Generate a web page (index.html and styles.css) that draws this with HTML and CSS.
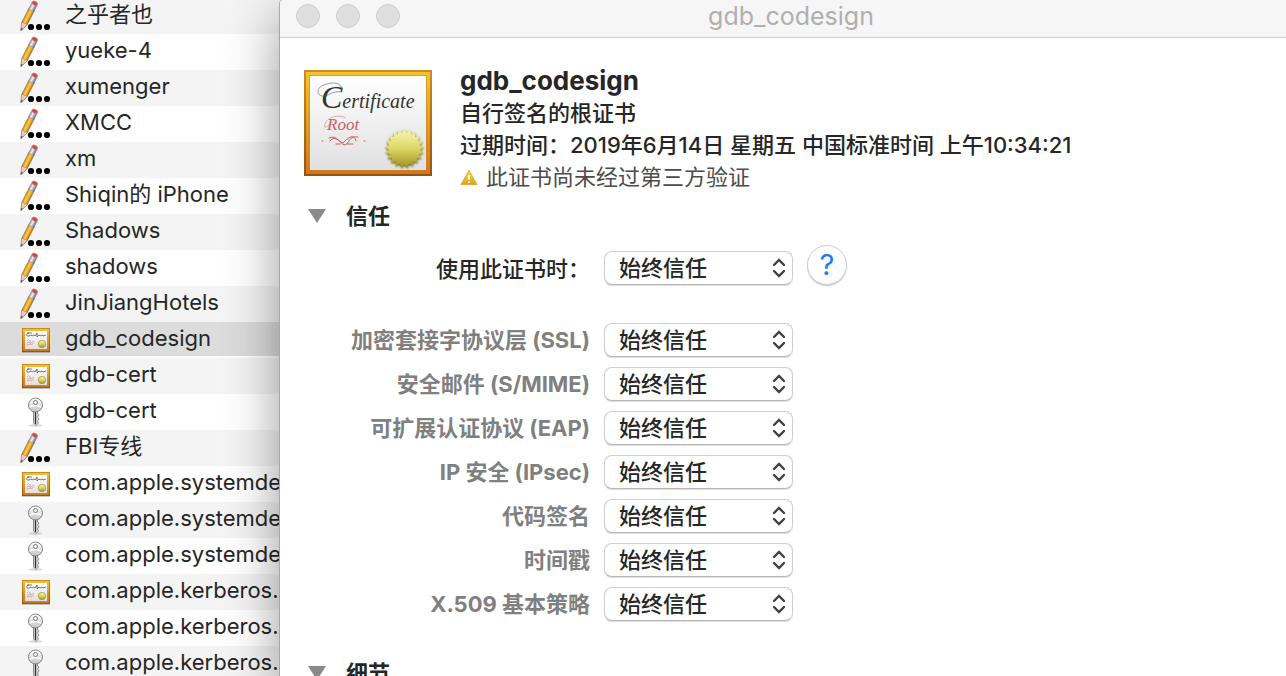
FILE: index.html
```html
<!DOCTYPE html>
<html lang="zh-CN">
<head>
<meta charset="utf-8">
<title>gdb_codesign</title>
<link rel="stylesheet" href="styles.css">
</head>
<body>
<svg class="defs" aria-hidden="true">
  <defs>
    <linearGradient id="wood" x1="0" y1="0" x2="0" y2="1"><stop offset="0" stop-color="#efc52c"/><stop offset="1" stop-color="#cb7a1c"/></linearGradient>
    <linearGradient id="edge" x1="0" y1="0" x2="0" y2="1"><stop offset="0" stop-color="#d08a20"/><stop offset="1" stop-color="#9c5010"/></linearGradient>
    <linearGradient id="paper" x1="0" y1="0" x2="0" y2="1"><stop offset="0" stop-color="#fff"/><stop offset="1" stop-color="#e0e0e0"/></linearGradient>
    <linearGradient id="gold" x1="0" y1="0" x2="0" y2="1"><stop offset="0" stop-color="#fbf8b4"/><stop offset=".5" stop-color="#dcd565"/><stop offset="1" stop-color="#a1921c"/></linearGradient>
    <linearGradient id="barrel" x1="0" y1="0" x2="1" y2="0"><stop offset="0" stop-color="#c7871c"/><stop offset=".45" stop-color="#ffd24d"/><stop offset="1" stop-color="#b86d12"/></linearGradient>
    <linearGradient id="ferrule" x1="0" y1="0" x2="1" y2="0"><stop offset="0" stop-color="#8b8fa0"/><stop offset=".4" stop-color="#f0f2f8"/><stop offset="1" stop-color="#5f6478"/></linearGradient>
    <linearGradient id="steel" x1="0" y1="0" x2="0" y2="1"><stop offset="0" stop-color="#fff"/><stop offset="1" stop-color="#c4c4c4"/></linearGradient>
    <linearGradient id="amber" x1="0" y1="0" x2="0" y2="1"><stop offset="0" stop-color="#fbdc4a"/><stop offset="1" stop-color="#e0a01c"/></linearGradient>
    <clipPath id="star">
      <path d="M100.500 59 117.400 88.250H83.600Z"/>
      <path d="M100.500 59 117.400 88.250H83.600Z" transform="rotate(17.143 100.5 78.5)"/>
      <path d="M100.500 59 117.400 88.250H83.600Z" transform="rotate(34.286 100.5 78.5)"/>
      <path d="M100.500 59 117.400 88.250H83.600Z" transform="rotate(51.429 100.5 78.5)"/>
      <path d="M100.500 59 117.400 88.250H83.600Z" transform="rotate(68.571 100.5 78.5)"/>
      <path d="M100.500 59 117.400 88.250H83.600Z" transform="rotate(85.714 100.5 78.5)"/>
      <path d="M100.500 59 117.400 88.250H83.600Z" transform="rotate(102.857 100.5 78.5)"/>
    </clipPath>
    <symbol id="i-note" viewBox="0 0 32 32">
      <g transform="translate(2.2 30) rotate(27)">
        <path d="M-3-23H3V-7L0 0-3-7Z" fill="url(#barrel)" stroke="#8a6428" stroke-width=".5"/>
        <path d="M-3-7 0 1 3-7 1.500-8 0-7-1.500-8Z" fill="#eccdb4" stroke="#9a7c68" stroke-width=".5"/>
        <path d="M-1-2 0 1 1-2Z" fill="#5a4a50"/>
        <path d="M-3-29H3V-22H-3Z" fill="url(#ferrule)" stroke="#777c90" stroke-width=".4"/>
        <path d="M-3-29V-30Q-3-32 0-32T3-30V-29Q0-27-3-29Z" fill="#d6453f" stroke="#b89090" stroke-width=".5"/>
      </g>
      <circle cx="12" cy="27" r="3.100"/><circle cx="20" cy="27" r="3.100"/><circle cx="28" cy="27" r="3.100"/>
    </symbol>
    <symbol id="i-cert" viewBox="0 0 32 32">
      <path d="M3 28H31" stroke="#0003" stroke-width="2"/>
      <path d="M3 4H31V28H3Z" fill="url(#edge)"/>
      <path d="M4 5H30V27H4Z" fill="url(#wood)"/>
      <path d="M6 7H28V25H6Z" fill="url(#paper)"/>
      <path d="M10 9C7 9 7 13 10 12L12 11 13 12 15 11 16 12 18 9 18 13 20 11 21 12 23 11 24 12 27 11M8 9H13" fill="none" stroke="#555" stroke-width=".8"/>
      <path d="M8 17Q10 14 11 17T15 17M8 19 11 18 12 21 15 19M8 21 11 20" fill="none" stroke="#e48b8b" stroke-width=".7"/>
      <circle cx="23" cy="20" r="3.700" fill="url(#gold)" stroke="#a89b35" stroke-width=".8"/>
    </symbol>
    <symbol id="i-key" viewBox="0 0 32 32">
      <ellipse cx="16.500" cy="29.500" rx="7" ry="1.500" fill="#0002"/>
      <path d="M14.500 14H18.500V18L20 19 18.500 21 20 23 18.500 25 19.500 27 17 29.500 14.500 27Z" fill="#ddd" stroke="#777" stroke-width=".8"/>
      <path d="M16.500 15V28" stroke="#333" stroke-width="1.300"/>
      <circle cx="16.500" cy="9" r="7" fill="url(#steel)" stroke="#858585"/>
      <path d="M11 11Q16 8 22 11" fill="none" stroke="#fff" stroke-width="1.500"/>
      <circle cx="16.500" cy="6.500" r="2" fill="#fff" stroke="#777"/>
    </symbol>
    <symbol id="i-arrows" viewBox="0 0 14 20"><path d="M2 7 7 2 12 7M2 13 7 18 12 13" fill="none" stroke="#404040" stroke-width="2.400" stroke-linecap="round" stroke-linejoin="miter"/></symbol>
  </defs>
</svg>
<div class="desktop">
  <nav class="sidebar" aria-label="钥匙串">
    <ul class="items">
      <li class="item"><svg class="icon"><use href="#i-note"/></svg><span>之乎者也</span></li>
      <li class="item"><svg class="icon"><use href="#i-note"/></svg><span>yueke-4</span></li>
      <li class="item"><svg class="icon"><use href="#i-note"/></svg><span>xumenger</span></li>
      <li class="item"><svg class="icon"><use href="#i-note"/></svg><span>XMCC</span></li>
      <li class="item"><svg class="icon"><use href="#i-note"/></svg><span>xm</span></li>
      <li class="item"><svg class="icon"><use href="#i-note"/></svg><span>Shiqin的 iPhone</span></li>
      <li class="item"><svg class="icon"><use href="#i-note"/></svg><span>Shadows</span></li>
      <li class="item"><svg class="icon"><use href="#i-note"/></svg><span>shadows</span></li>
      <li class="item"><svg class="icon"><use href="#i-note"/></svg><span>JinJiangHotels</span></li>
      <li class="item selected"><svg class="icon"><use href="#i-cert"/></svg><span>gdb_codesign</span></li>
      <li class="item"><svg class="icon"><use href="#i-cert"/></svg><span>gdb-cert</span></li>
      <li class="item"><svg class="icon"><use href="#i-key"/></svg><span>gdb-cert</span></li>
      <li class="item"><svg class="icon"><use href="#i-note"/></svg><span>FBI专线</span></li>
      <li class="item"><svg class="icon"><use href="#i-cert"/></svg><span>com.apple.systemde</span></li>
      <li class="item"><svg class="icon"><use href="#i-key"/></svg><span>com.apple.systemde</span></li>
      <li class="item"><svg class="icon"><use href="#i-key"/></svg><span>com.apple.systemde</span></li>
      <li class="item"><svg class="icon"><use href="#i-cert"/></svg><span>com.apple.kerberos.</span></li>
      <li class="item"><svg class="icon"><use href="#i-key"/></svg><span>com.apple.kerberos.</span></li>
      <li class="item"><svg class="icon"><use href="#i-key"/></svg><span>com.apple.kerberos.</span></li>
    </ul>
  </nav>
  <main class="window">
    <header class="titlebar">
      <div class="lights">
        <button class="light" aria-label="关闭"></button>
        <button class="light" aria-label="最小化"></button>
        <button class="light" aria-label="缩放"></button>
      </div>
      <div class="title">gdb_codesign</div>
    </header>
    <div class="content">
      <section class="summary">
        <svg class="certificate" viewBox="0 0 128 106">
          <path d="M0 0H128V106H0Z" fill="url(#edge)"/>
          <path d="M2 2H126V104H2Z" fill="url(#wood)"/>
          <path d="M5 5H123V101H5Z" fill="#c8872a" opacity=".55"/>
          <path d="M6 6H122V100H6Z" fill="url(#paper)"/>
          <text class="script-name" x="17" y="38"><tspan class="script-cap">C</tspan>ertificate</text>
          <path d="M37 21C40 15 32 11 23 14C12 16 12 25 18 26C24 27 29 20 37 22" fill="none" stroke="#555" stroke-width=".6"/>
          <text class="script-root" x="23" y="60">Root</text>
          <path d="M30 50C24 57 19 60 21 54C23 47 35 44 42 48" fill="none" stroke="#d37779" stroke-width=".6"/>
          <path d="M26 71C31 65 34 71 39 73C46 65 51 65 52 71M25 68C34 64 35 74 41 75C45 74 45 65 54 67M32 74H36M43 74H49M18 71H19M60 71H61" fill="none" stroke="#cc5c60" stroke-width="1" stroke-linecap="round"/>
          <g class="seal"><rect x="81" y="59" width="39" height="39" fill="url(#gold)" clip-path="url(#star)"/></g>
        </svg>
        <div class="facts">
          <h1 class="name">gdb_codesign</h1>
          <p class="fact">自行签名的根证书</p>
          <p class="fact">过期时间：2019年6月14日 星期五 中国标准时间 上午10:34:21</p>
          <p class="fact notice">
            <svg class="warning" viewBox="0 0 18 17"><path d="M9 1.500 17 15.500H1Z" fill="url(#amber)" stroke="#e5ad2c" stroke-linejoin="round"/><path d="M9 6V10.500M9 12.500V14" stroke="#fff" stroke-width="2"/></svg>
            <span>此证书尚未经过第三方验证</span>
          </p>
        </div>
      </section>
      <details open>
        <summary class="heading"><svg class="triangle" viewBox="0 0 18 14"><path d="M0 0H18L9 14Z"/></svg>信任</summary>
        <form class="trust">
          <div class="row first">
            <label for="all">使用此证书时：</label>
            <span class="picker"><select id="all"><option>始终信任</option></select><svg class="arrows"><use href="#i-arrows"/></svg></span>
            <button class="help" type="button" aria-label="帮助"><span>?</span></button>
          </div>
          <div class="row"><label for="ssl">加密套接字协议层 (SSL)</label><span class="picker"><select id="ssl"><option>始终信任</option></select><svg class="arrows"><use href="#i-arrows"/></svg></span></div>
          <div class="row"><label for="smime">安全邮件 (S/MIME)</label><span class="picker"><select id="smime"><option>始终信任</option></select><svg class="arrows"><use href="#i-arrows"/></svg></span></div>
          <div class="row"><label for="eap">可扩展认证协议 (EAP)</label><span class="picker"><select id="eap"><option>始终信任</option></select><svg class="arrows"><use href="#i-arrows"/></svg></span></div>
          <div class="row"><label for="ipsec">IP 安全 (IPsec)</label><span class="picker"><select id="ipsec"><option>始终信任</option></select><svg class="arrows"><use href="#i-arrows"/></svg></span></div>
          <div class="row"><label for="code">代码签名</label><span class="picker"><select id="code"><option>始终信任</option></select><svg class="arrows"><use href="#i-arrows"/></svg></span></div>
          <div class="row"><label for="time">时间戳</label><span class="picker"><select id="time"><option>始终信任</option></select><svg class="arrows"><use href="#i-arrows"/></svg></span></div>
          <div class="row"><label for="x509">X.509 基本策略</label><span class="picker"><select id="x509"><option>始终信任</option></select><svg class="arrows"><use href="#i-arrows"/></svg></span></div>
        </form>
      </details>
      <details open>
        <summary class="heading"><svg class="triangle" viewBox="0 0 18 14"><path d="M0 0H18L9 14Z"/></svg>细节</summary>
      </details>
    </div>
  </main>
</div>
</body>
</html>
```
FILE: styles.css
```css
* { box-sizing: border-box; }
body {
  margin: 0;
  overflow: hidden;
  background: #fff;
  color: #262626;
  font: 22px/32px Inter, "Noto Sans CJK SC", sans-serif;
}
button, select { font: inherit; color: inherit; }
.defs { position: absolute; width: 0; height: 0; }
.desktop { display: flex; height: 100vh; overflow: hidden; }
.sidebar { flex: none; width: 280px; overflow: hidden; }
.items { margin: -2px 0 0; padding: 0; list-style: none; }
.item {
  display: flex;
  align-items: flex-start;
  gap: 14px;
  height: 36px;
  padding-left: 19px;
  white-space: nowrap;
}
.item:nth-child(odd) { background: #f4f4f4; }
.item.selected { background: #dcdcdc; border-bottom: 2px solid #fff; }
.item .icon { flex: none; width: 32px; height: 32px; margin-top: 2px; }

.window {
  position: relative;
  flex: 1;
  min-width: 0;
  background: #fff;
  border-top-left-radius: 4px;
  box-shadow: 0 0 0 1px #a8a8a8, 0 16px 54px 0 rgba(0, 0, 0, .42);
}
.titlebar {
  display: grid;
  grid-template-columns: 1fr auto 1fr;
  align-items: center;
  height: 38px;
  padding: 0 0 5px 16px;
  background: #f6f6f6;
  border-bottom: 1px solid #cfcfcf;
  border-top-left-radius: 4px;
}
.lights { display: flex; gap: 16px; }
.light { width: 24px; height: 24px; padding: 0; border: 1px solid #cecece; border-radius: 50%; background: #dedede; }
.title { font-size: 25px; color: #b0b0b0; }

.content { padding: 27px 24px 0; }
.summary { display: flex; gap: 28px; }
.certificate { flex: none; width: 128px; height: 106px; margin-top: 5px; }
.script-name { font: italic 20px "Liberation Serif", serif; fill: #333; }
.script-cap { font-size: 32px; }
.script-root { font: italic 17px "Liberation Serif", serif; fill: #d05c60; }
.seal { filter: drop-shadow(0 1px 1px #665c20); }
.facts { min-width: 0; }
.name { margin: 0; font-size: 26px; line-height: 32px; font-weight: 700; }
.fact { margin: 0; font-weight: 500; }
.fact.notice { display: flex; align-items: center; gap: 8px; font-weight: 400; color: #4c4c4c; }
.warning { width: 18px; height: 17px; }

.heading { display: flex; align-items: center; gap: 20px; margin-top: 7px; padding-left: 4px; font-weight: 700; list-style: none; }
.heading::-webkit-details-marker { display: none; }
.triangle { width: 18px; height: 14px; fill: #8a8a8a; }
.trust { display: grid; gap: 10px; margin: 13px 0 36px; }
.row { display: grid; grid-template-columns: 286px 189px 40px; column-gap: 14px; align-items: center; }
.row label { text-align: right; white-space: nowrap; font-weight: 700; color: #808080; }
.row.first { align-items: end; margin-bottom: 28px; }
.row.first label { font-weight: 500; color: #262626; }
.picker { position: relative; display: flex; }
.picker select {
  width: 100%;
  height: 34px;
  padding: 0 14px;
  appearance: none;
  border: 1px solid #cfcfcf;
  border-bottom-color: #b8b8b8;
  border-radius: 8px;
  background: #fff;
  box-shadow: 0 1px 1px rgba(0, 0, 0, .14);
  font-weight: 500;
}
.arrows { position: absolute; right: 7px; top: 7px; width: 14px; height: 20px; pointer-events: none; }
.help {
  width: 40px;
  height: 40px;
  padding: 0;
  border: 1px solid #cfcfcf;
  border-radius: 50%;
  background: #fff;
  box-shadow: 0 1px 1px rgba(0, 0, 0, .2);
  color: #147efb;
  font-size: 29px;
  line-height: 36px;
}
```
